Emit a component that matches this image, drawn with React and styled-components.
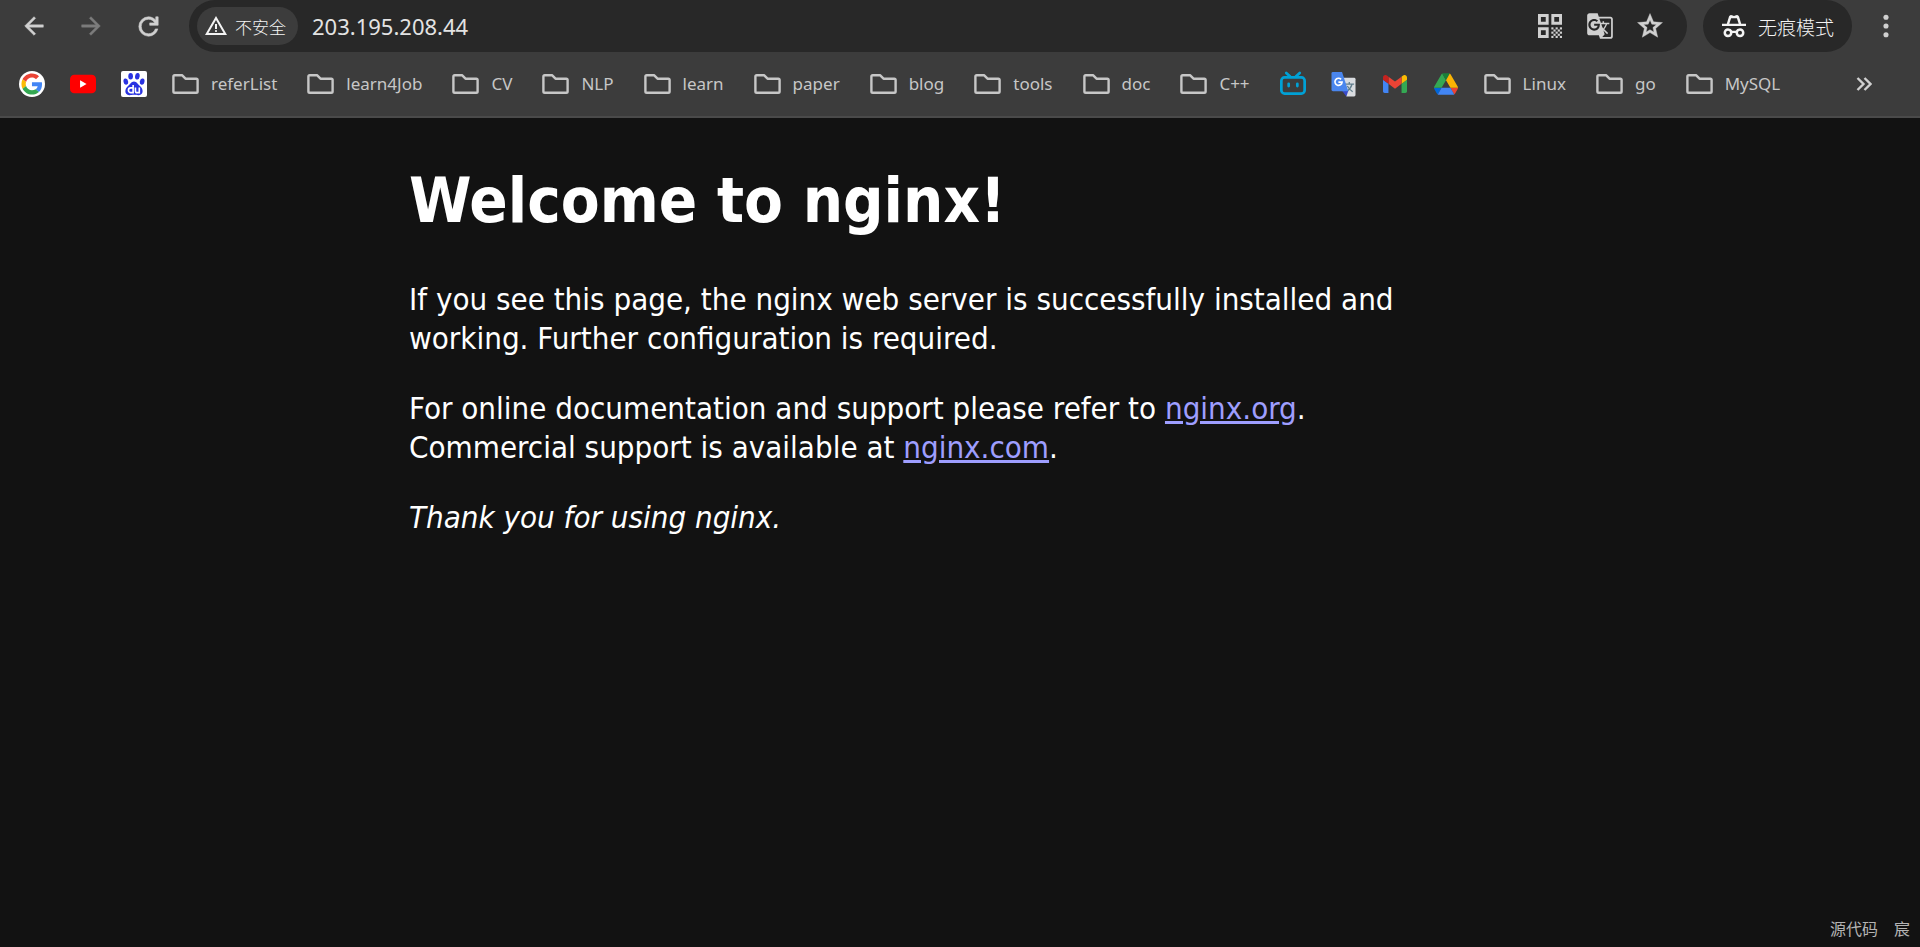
import React from "react";
import styled, { createGlobalStyle } from "styled-components";

const GlobalStyle = createGlobalStyle`
  * { box-sizing: border-box; }
  html { background: #121212; color-scheme: dark; }
  body { margin: 0; background: #121212; font-family: "Noto Sans", "Noto Sans CJK SC", sans-serif; }
  button { border: 0; padding: 0; background: none; color: inherit; font: inherit; }
`;

const Screen = styled.div`
  min-height: 100vh;
  display: flex;
  flex-direction: column;
`;

const Chrome = styled.header`
  background: #3c3c3c;
  color: #c7c7c7;
  border-bottom: 2px solid #4a4a4a;
`;

const Toolbar = styled.div`
  display: flex;
  align-items: center;
  height: 52px;
  padding: 0 14px;
`;

const IconButton = styled.button`
  display: grid;
  place-items: center;
  flex: none;
  width: 40px;
  height: 40px;
  color: ${(p) => (p.$dim ? "#7c7c7c" : "#d0d0d0")};
`;

const Navigation = styled.nav`
  display: flex;
  gap: 17px;
  margin-right: 21px;
`;

const AddressBar = styled.div`
  display: flex;
  align-items: center;
  flex: 1;
  height: 52px;
  padding: 0 17px 0 8px;
  border-radius: 26px;
  background: #282828;
`;

const SecurityChip = styled.button`
  && {
    display: flex;
    align-items: center;
    gap: 7px;
    height: 38px;
    padding: 0 12px 0 7px;
    border-radius: 19px;
    background: #3c3c3c;
    color: #f4f4f4;
    font-family: "Noto Sans CJK SC", sans-serif;
    font-size: 17px;
    font-weight: 300;
    white-space: nowrap;
  }
`;

const AddressInput = styled.input`
  flex: 1;
  min-width: 0;
  padding: 0 14px;
  border: 0;
  outline: 0;
  background: none;
  color: #e3e3e3;
  font: 22px "Noto Sans", sans-serif;
`;

const AddressActions = styled.div`
  display: flex;
  gap: 10px;
`;

const IncognitoBadge = styled.button`
  && {
    display: flex;
    align-items: center;
    gap: 12px;
    height: 52px;
    margin: 0 14px 0 16px;
    padding: 0 18px 0 19px;
    border-radius: 26px;
    background: #282828;
    color: #f4f4f4;
    font-family: "Noto Sans CJK SC", sans-serif;
    font-size: 19px;
    font-weight: 300;
    white-space: nowrap;
  }
`;

const BookmarksBar = styled.nav`
  display: flex;
  align-items: center;
  height: 64px;
  padding: 0 36px 0 19px;
`;

const BookmarkList = styled.div`
  display: flex;
  align-items: center;
  flex: 1;
  gap: 25px;
  min-width: 0;
  overflow: hidden;
`;

const Site = styled.a`
  display: grid;
  place-items: center;
  flex: none;
  width: 26px;
  height: 26px;
`;

const Folder = styled.button`
  && {
    display: flex;
    align-items: center;
    gap: 12px;
    flex: none;
    margin-right: 5px;
    font-size: 17px;
    line-height: 28px;
  }
`;

const Page = styled.main`
  flex: 1;
  width: 1102px;
  max-width: 100%;
  margin: 0 auto;
  color: #fff;
  font-family: "DejaVu Sans Condensed", "DejaVu Sans", sans-serif;
  font-size: 31px;
  line-height: 39px;
`;

const Title = styled.h1`
  margin: 44px 0 40px;
  font-size: 63px;
  line-height: 78px;
`;

const Paragraph = styled.p`
  margin: 0 0 31px;
`;

const TextLink = styled.a`
  color: #9e9eff;
`;

const Watermark = styled.footer`
  display: flex;
  justify-content: flex-end;
  gap: 16px;
  padding: 0 10px 7px;
  color: #b4b4b4;
  font-size: 16px;
  line-height: 22px;
`;

const Glyph = ({ size = 28, box = 24, children, ...rest }) => (
  <svg width={size} height={size} viewBox={`0 0 ${box} ${box}`} fill="currentColor" aria-hidden="true" {...rest}>
    {children}
  </svg>
);

const BackIcon = () => (
  <Glyph stroke="currentColor" strokeWidth=".4"><path d="M20 11H7.800l5.600-5.600L12 4l-8 8 8 8 1.400-1.400L7.800 13H20z" /></Glyph>
);
const ForwardIcon = () => (
  <Glyph stroke="currentColor" strokeWidth=".4"><path d="M4 11h12.200l-5.600-5.600L12 4l8 8-8 8-1.400-1.400 5.600-5.600H4z" /></Glyph>
);
const ReloadIcon = () => (
  <Glyph size={29} stroke="currentColor" strokeWidth=".5"><path d="M12 20q-3.350 0-5.675-2.325T4 12t2.325-5.675T12 4q1.725 0 3.300.713T18 6.750V4h2v7h-7V9h4.200q-.8-1.400-2.187-2.200T12 6Q9.500 6 7.750 7.750T6 12t1.750 4.250T12 18q1.925 0 3.475-1.100T17.650 14h2.100q-.7 2.650-2.850 4.325T12 20" /></Glyph>
);
const WarningIcon = () => (
  <Glyph size={24}><path d="M1 21 12 2l11 19zm3.450-2h15.100L12 6zM12 18q.425 0 .713-.288T13 17t-.287-.712T12 16t-.712.288T11 17t.288.713T12 18m-1-3h2v-5h-2z" /></Glyph>
);
const checker = [];
for (let row = 0; row < 5; row += 1) {
  for (let col = row % 2; col < 5; col += 2) checker.push([13 + col * 1.6, 13 + row * 1.6]);
}
const QrIcon = () => (
  <Glyph size={32}>
    <path fillRule="evenodd" d="M3 3h8v8H3zm2.200 2.200v3.600h3.600V5.200zM3 13h8v8H3zm2.200 2.200v3.600h3.600v-3.600zM13 3h8v8h-8zm2.200 2.200v3.600h3.600V5.200z" />
    {checker.map(([x, y]) => <rect key={`${x}-${y}`} x={x} y={y} width="1.600" height="1.600" />)}
  </Glyph>
);
const TranslateIcon = () => (
  <Glyph size={28}>
    <path d="M21 4H11l-1-3H3c-1.100 0-2 .9-2 2v15c0 1.100.9 2 2 2h8l1 3h9c1.100 0 2-.9 2-2V6c0-1.100-.9-2-2-2M7 16c-2.760 0-5-2.240-5-5s2.240-5 5-5c1.350 0 2.480.5 3.350 1.300L9.030 8.570c-.38-.36-1.040-.78-2.030-.78-1.740 0-3.150 1.440-3.150 3.210S5.260 14.210 7 14.210c2.010 0 2.840-1.440 2.920-2.410H7v-1.710h4.680c.7.310.12.610.12 1.020C11.800 13.970 9.890 16 7 16m6.170-5.420h3.700c-.43 1.250-1.110 2.430-2.050 3.470-.31-.35-.6-.72-.86-1.100zm8.330 9.920c0 .55-.45 1-1 1H14l2-2.500-1.040-3.100 3.100 3.100.92-.92-3.300-3.250.02-.02c1.130-1.250 1.930-2.690 2.400-4.220H20v-1.300h-4.530V8h-1.290v1.290h-1.440L11.460 5.500h9.040c.55 0 1 .45 1 1z" />
  </Glyph>
);
const StarIcon = () => (
  <Glyph size={30} stroke="currentColor" strokeWidth=".3"><path d="m8.850 16.825 3.150-1.900 3.150 1.925-.825-3.600 2.775-2.400-3.650-.325-1.450-3.400-1.450 3.375-3.650.325 2.775 2.425zM5.825 21l1.625-7.025L2 9.250l7.200-.625L12 2l2.800 6.625 7.200.625-5.450 4.725L18.175 21 12 17.275z" /></Glyph>
);
const IncognitoIcon = () => (
  <Glyph size={24}><path fillRule="evenodd" d="M0 9.700h4.800L7 2.500Q8 .2 10 1.200l2 .8 2-.8q2-1 3 1.300l2.200 7.200H24V12H0zm7.300 0h9.400L14.900 4.200h-5.800zM6 14.300q3.200 0 4.300 2.500h3.400q1.100-2.500 4.300-2.500a4.500 4.500 0 1 1-4.500 4.800h-3a4.500 4.500 0 1 1-4.500-4.800m0 2.500a2 2 0 1 0 0 4 2 2 0 0 0 0-4m12 0a2 2 0 1 0 0 4 2 2 0 0 0 0-4" /></Glyph>
);
const MenuIcon = () => (
  <Glyph size={28}><circle cx="12" cy="4.500" r="2.200" /><circle cx="12" cy="12" r="2.200" /><circle cx="12" cy="19.500" r="2.200" /></Glyph>
);
const FolderIcon = () => (
  <svg width="27" height="22" viewBox="0 0 27 22" fill="none" stroke="#c7c7c7" strokeWidth="2.400" strokeLinejoin="round" aria-hidden="true">
    <path d="M2.700 2.200h7.300l3.500 3.500H24.300q1.300 0 1.300 1.300v11.500q0 1.300-1.300 1.300H2.700q-1.300 0-1.300-1.300V3.500q0-1.300 1.300-1.300Z" />
  </svg>
);
const MoreIcon = () => (
  <svg width="16" height="14" viewBox="0 0 16 14" fill="none" stroke="currentColor" strokeWidth="2.400" aria-hidden="true">
    <path d="m1.500 1 6 6-6 6M8.500 1l6 6-6 6" />
  </svg>
);

const GoogleLogo = () => (
  <Glyph size={26} box={48}>
    <circle cx="24" cy="24" r="24" fill="#fff" />
    <g transform="translate(4.500 4.500) scale(.81)">
      <path fill="#EA4335" d="M24 9.500c3.540 0 6.710 1.220 9.210 3.600l6.850-6.850C35.900 2.380 30.470 0 24 0 14.620 0 6.510 5.380 2.560 13.220l7.980 6.190C12.430 13.720 17.740 9.500 24 9.500z" />
      <path fill="#4285F4" d="M46.980 24.550c0-1.570-.15-3.090-.38-4.550H24v9.020h12.940c-.58 2.960-2.260 5.480-4.780 7.180l7.730 6c4.510-4.180 7.090-10.360 7.090-17.650z" />
      <path fill="#FBBC05" d="M10.530 28.590c-.48-1.450-.76-2.990-.76-4.590s.27-3.140.76-4.590l-7.980-6.190C.92 16.460 0 20.120 0 24c0 3.880.92 7.540 2.560 10.780z" />
      <path fill="#34A853" d="M24 48c6.480 0 11.930-2.130 15.890-5.810l-7.730-6c-2.150 1.450-4.920 2.300-8.160 2.300-6.260 0-11.570-4.220-13.470-9.910l-7.980 6.190C6.510 42.620 14.620 48 24 48z" />
    </g>
  </Glyph>
);
const YoutubeLogo = () => (
  <Glyph size={26}><rect y="3.500" width="24" height="17" rx="4" fill="#f00" /><path fill="#fff" d="m9.300 8.500 6 3.500-6 3.500z" /></Glyph>
);
const BaiduLogo = () => (
  <Glyph size={26} box={27} fill="#2932e1">
    <rect width="27" height="27" rx="2" fill="#fff" />
    <ellipse cx="5" cy="11" rx="2.400" ry="3.200" transform="rotate(-10 5 11)" />
    <ellipse cx="10" cy="5.500" rx="2.400" ry="3.400" />
    <ellipse cx="17" cy="5.500" rx="2.400" ry="3.400" transform="rotate(8 17 5.500)" />
    <ellipse cx="22" cy="11" rx="2.400" ry="3.200" transform="rotate(10 22 11)" />
    <path d="M13.500 10.800c3 0 4 3 6.500 5 3.500 3 3.500 9-1.500 9.300-2 .1-3-.4-5-.4s-3 .5-5 .4c-5-.3-5-6.300-1.500-9.300 2.500-2 3.500-5 6.500-5Z" />
    <path d="M12.600 14.500v8H10.200a2.400 2.400 0 0 1 0-5h2.400M15 17.200v3.500q0 1.800 1.800 1.800h2.200v-5.300" fill="none" stroke="#fff" strokeWidth="1.700" />
  </Glyph>
);
const BilibiliLogo = () => (
  <Glyph size={26} box={27} fill="none" stroke="#00a1d6" strokeWidth="2.800" strokeLinecap="round">
    <rect x="1.400" y="6.700" width="24.200" height="16.800" rx="3.400" />
    <path d="m6.500 2 4 3.700M20.500 2l-4 3.700M9 13.300v2.400M18 13.300v2.400" />
  </Glyph>
);
const TranslateLogo = () => (
  <Glyph size={25} box={26}>
    <path fill="#d9dce0" d="M10 6h14q1.500 0 1.500 1.500V24q0 1.500-1.500 1.500h-8z" />
    <path d="M14 12.500h10M19 10.300v2.200M22 12.500q-1.500 5-5.500 7.500M17 14.500q2 3.500 5.500 6" fill="none" stroke="#607d8b" strokeWidth="1.300" />
    <path fill="#3949c8" d="M11.500 19.500h6.500l-2 6z" />
    <path fill="#4a86ee" d="M2 0h9.500L18 20H2Q.5 20 .5 18.500v-17Q.5 0 2 0Z" />
    <path d="M10.500 7.700A3.700 3.700 0 1 0 11.500 10.500H7.700" fill="none" stroke="#fff" strokeWidth="1.700" />
  </Glyph>
);
const GmailLogo = () => (
  <svg width="24" height="18" viewBox="52 42 88 66" aria-hidden="true">
    <path fill="#4285f4" d="M58 108h14V74L52 59v43c0 3.320 2.690 6 6 6" />
    <path fill="#34a853" d="M120 108h14c3.320 0 6-2.690 6-6V59l-20 15" />
    <path fill="#fbbc04" d="M120 48v26l20-15v-8c0-7.420-8.470-11.650-14.400-7.200" />
    <path fill="#ea4335" d="M72 74V48l24 18 24-18v26L96 92" />
    <path fill="#c5221f" d="M52 51v8l20 15V48l-5.600-4.200c-5.940-4.450-14.400-.22-14.400 7.200" />
  </svg>
);
const DriveLogo = () => (
  <svg width="24" height="22" viewBox="0 0 87.300 78" aria-hidden="true">
    <path d="m6.600 66.850 3.850 6.650c.8 1.400 1.950 2.500 3.300 3.300L27.500 53H0c0 1.550.4 3.100 1.200 4.500z" fill="#0066da" />
    <path d="M43.650 25 29.900 1.200c-1.350.8-2.500 1.900-3.300 3.300L1.200 48.500A9 9 0 0 0 0 53h27.500z" fill="#34a853" />
    <path d="M73.550 76.800c1.350-.8 2.500-1.900 3.300-3.300l1.600-2.750L86.100 57.500c.8-1.400 1.200-2.950 1.200-4.500H59.800l5.850 11.500z" fill="#ea4335" />
    <path d="M43.650 25 57.400 1.200C56.050.4 54.500 0 52.900 0H34.400c-1.600 0-3.150.45-4.500 1.200z" fill="#188038" />
    <path d="M59.800 53H27.500L13.750 76.800c1.350.8 2.900 1.200 4.500 1.200h50.800c1.600 0 3.150-.45 4.500-1.200z" fill="#4285f4" />
    <path d="M73.400 26.500 60.700 4.500c-.8-1.400-1.950-2.500-3.300-3.300L43.650 25l16.150 28h27.450c0-1.550-.4-3.100-1.200-4.500z" fill="#fbb404" />
  </svg>
);

const bookmarks = [
  { name: "Google", Logo: GoogleLogo },
  { name: "YouTube", Logo: YoutubeLogo },
  { name: "Baidu", Logo: BaiduLogo },
  ..."referList learn4Job CV NLP learn paper blog tools doc C++".split(" ").map((name) => ({ name })),
  { name: "Bilibili", Logo: BilibiliLogo },
  { name: "Google Translate", Logo: TranslateLogo },
  { name: "Gmail", Logo: GmailLogo },
  { name: "Google Drive", Logo: DriveLogo },
  { name: "Linux" },
  { name: "go" },
  { name: "MySQL" },
];

export default function App() {
  return (
    <Screen>
      <GlobalStyle />
      <Chrome>
        <Toolbar>
          <Navigation>
            <IconButton aria-label="Back"><BackIcon /></IconButton>
            <IconButton aria-label="Forward" $dim><ForwardIcon /></IconButton>
            <IconButton aria-label="Reload"><ReloadIcon /></IconButton>
          </Navigation>
          <AddressBar>
            <SecurityChip><WarningIcon />不安全</SecurityChip>
            <AddressInput aria-label="Address" defaultValue="203.195.208.44" />
            <AddressActions>
              <IconButton aria-label="QR code"><QrIcon /></IconButton>
              <IconButton aria-label="Translate"><TranslateIcon /></IconButton>
              <IconButton aria-label="Bookmark"><StarIcon /></IconButton>
            </AddressActions>
          </AddressBar>
          <IncognitoBadge><IncognitoIcon />无痕模式</IncognitoBadge>
          <IconButton aria-label="Menu"><MenuIcon /></IconButton>
        </Toolbar>
        <BookmarksBar>
          <BookmarkList>
            {bookmarks.map(({ name, Logo }) =>
              Logo ? (
                <Site key={name} href="#" aria-label={name}><Logo /></Site>
              ) : (
                <Folder key={name}><FolderIcon />{name}</Folder>
              )
            )}
          </BookmarkList>
          <IconButton aria-label="More bookmarks"><MoreIcon /></IconButton>
        </BookmarksBar>
      </Chrome>
      <Page>
        <Title>Welcome to nginx!</Title>
        <Paragraph>
          If you see this page, the nginx web server is successfully installed and working. Further configuration is required.
        </Paragraph>
        <Paragraph>
          For online documentation and support please refer to <TextLink href="http://nginx.org/">nginx.org</TextLink>.<br />
          Commercial support is available at <TextLink href="http://nginx.com/">nginx.com</TextLink>.
        </Paragraph>
        <Paragraph><em>Thank you for using nginx.</em></Paragraph>
      </Page>
      <Watermark><span>源代码</span><span>宸</span></Watermark>
    </Screen>
  );
}
